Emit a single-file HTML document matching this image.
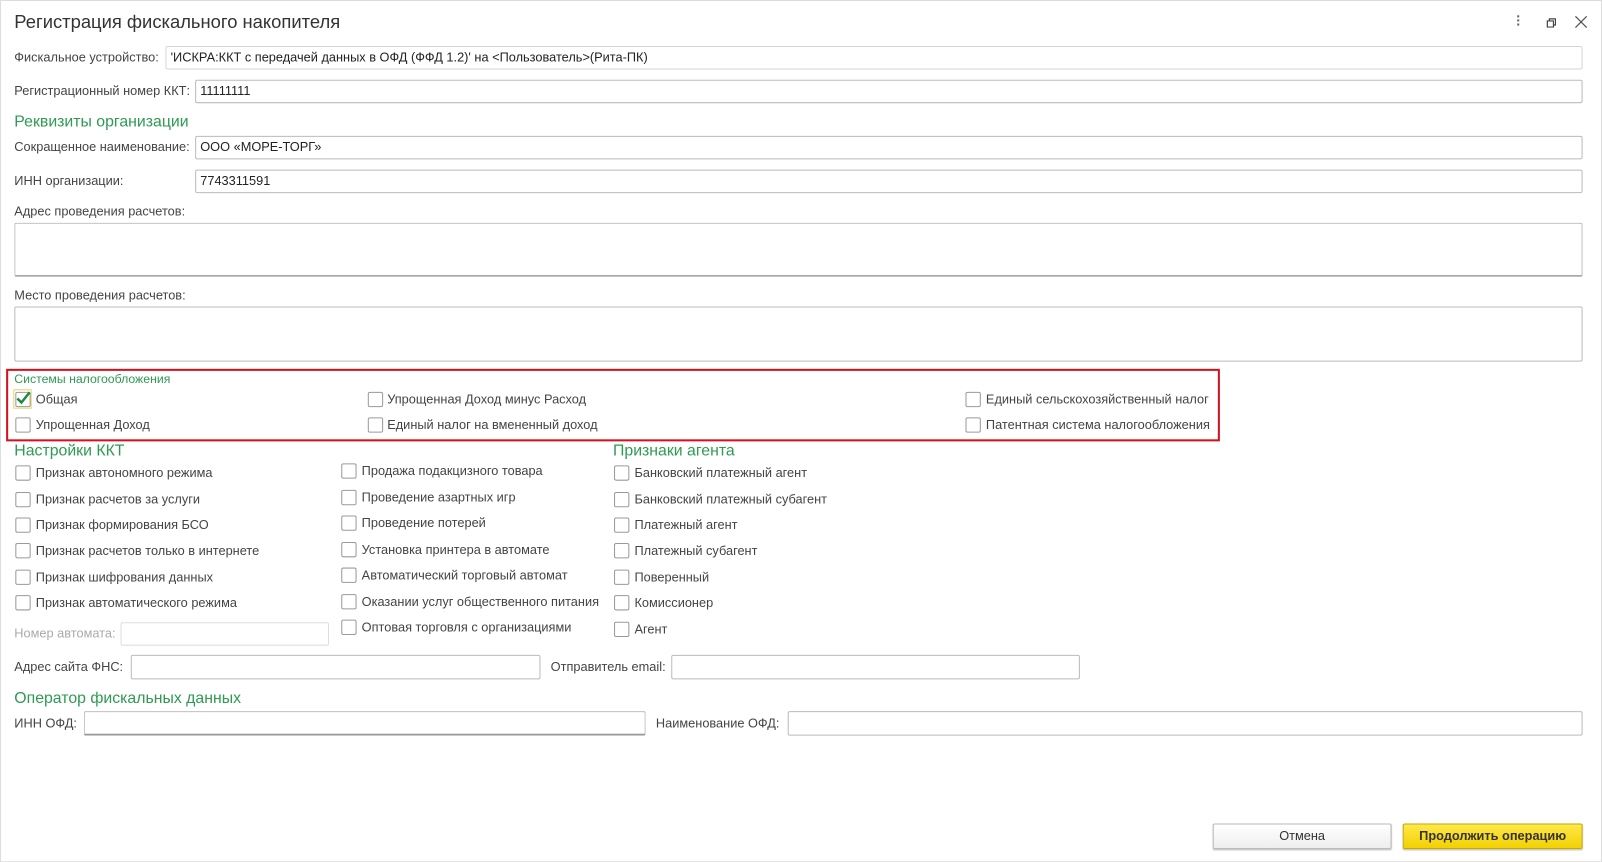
<!DOCTYPE html>
<html><head><meta charset="utf-8"><style>
html,body{margin:0;padding:0;background:#fff;overflow:hidden;width:1602px;height:862px}
#w{position:absolute;left:0;top:0;width:1568px;height:844px;transform:scale(1.02168);transform-origin:0 0;font-family:"Liberation Sans",sans-serif;font-size:12.5px;color:#444;border:1px solid #ddd;box-sizing:border-box}
.a{position:absolute;white-space:nowrap}
.l{position:absolute;white-space:nowrap;transform:translateY(-50%)}
.f{position:absolute;border:1px solid #bbb;border-radius:2px;background:#fff;box-sizing:border-box;padding-left:4px;line-height:21px;color:#222;white-space:nowrap;overflow:hidden}
.g{color:#2e9a52;font-size:15.5px}
.cb{position:absolute;width:13px;height:13px;border:1px solid #9a9a9a;border-radius:2px;background:#fff;transform:translateY(-50%)}
</style></head><body><div id="w">
<div class="l" style="left:13px;top:21px;font-size:18px;color:#333">Регистрация фискального накопителя</div>
<div class="a" style="left:1484px;top:14px;width:3px"><div style="width:2px;height:2px;background:#666;margin-bottom:2px"></div><div style="width:2px;height:2px;background:#666;margin-bottom:2px"></div><div style="width:2px;height:2px;background:#666"></div></div>
<svg class="a" style="left:1511px;top:15px" width="11" height="11"><path d="M2.5 4.5h6v6h-6z M4.5 4.5v-2h6v6h-2" fill="none" stroke="#444" stroke-width="1.2"/></svg>
<svg class="a" style="left:1540px;top:14px" width="13" height="13"><path d="M1 1L12 12M12 1L1 12" stroke="#555" stroke-width="1.2"/></svg>

<div class="l" style="left:13px;top:55px">Фискальное устройство:</div>
<div class="f" style="left:161px;top:44px;width:1387px;height:23px;border-color:#d6d6d6">'ИСКРА:ККТ с передачей данных в ОФД (ФФД 1.2)' на &lt;Пользователь&gt;(Рита-ПК)</div>
<div class="l" style="left:13px;top:88px">Регистрационный номер ККТ:</div>
<div class="f" style="left:190px;top:77px;width:1358px;height:23px">11111111</div>
<div class="l g" style="left:13px;top:119px">Реквизиты организации</div>
<div class="l" style="left:13px;top:143px">Сокращенное наименование:</div>
<div class="f" style="left:190px;top:132px;width:1358px;height:23px">ООО «МОРЕ-ТОРГ»</div>
<div class="l" style="left:13px;top:176px">ИНН организации:</div>
<div class="f" style="left:190px;top:165px;width:1358px;height:23px">7743311591</div>
<div class="l" style="left:13px;top:206px">Адрес проведения расчетов:</div>
<div class="f" style="left:13px;top:217px;width:1535px;height:53px;border-bottom:2px solid #aaa"></div>
<div class="l" style="left:13px;top:288px">Место проведения расчетов:</div>
<div class="f" style="left:13px;top:299px;width:1535px;height:54px"></div>

<div class="a" style="left:5px;top:360px;width:1188px;height:71px;border:2px solid #d3121d;box-sizing:border-box"></div>
<div class="l" style="left:13px;top:370px;color:#2e9a52;font-size:12px">Системы налогообложения</div>
<div class="a" style="left:12px;top:380px;width:18px;height:19px;border:1px solid #e8d36a;box-sizing:border-box"></div>
<div class="cb" style="left:14px;top:390px"></div>
<svg class="a" style="left:14px;top:382px" width="16" height="14"><path d="M2 7L6 11L14 1" fill="none" stroke="#1d8a3e" stroke-width="2.4"/></svg>
<div class="l" style="left:34px;top:390px">Общая</div>
<div class="cb" style="left:14px;top:415px"></div><div class="l" style="left:34px;top:415px">Упрощенная Доход</div>
<div class="cb" style="left:359px;top:390px"></div><div class="l" style="left:378px;top:390px">Упрощенная Доход минус Расход</div>
<div class="cb" style="left:359px;top:415px"></div><div class="l" style="left:378px;top:415px">Единый налог на вмененный доход</div>
<div class="cb" style="left:944px;top:390px"></div><div class="l" style="left:964px;top:390px">Единый сельскохозяйственный налог</div>
<div class="cb" style="left:944px;top:415px"></div><div class="l" style="left:964px;top:415px">Патентная система налогообложения</div>

<div class="l g" style="left:13px;top:441px">Настройки ККТ</div>
<div class="cb" style="left:14px;top:462px"></div><div class="l" style="left:34px;top:462px">Признак автономного режима</div>
<div class="cb" style="left:14px;top:488px"></div><div class="l" style="left:34px;top:488px">Признак расчетов за услуги</div>
<div class="cb" style="left:14px;top:513px"></div><div class="l" style="left:34px;top:513px">Признак формирования БСО</div>
<div class="cb" style="left:14px;top:538px"></div><div class="l" style="left:34px;top:538px">Признак расчетов только в интернете</div>
<div class="cb" style="left:14px;top:564px"></div><div class="l" style="left:34px;top:564px">Признак шифрования данных</div>
<div class="cb" style="left:14px;top:589px"></div><div class="l" style="left:34px;top:589px">Признак автоматического режима</div>
<div class="l" style="left:13px;top:619px;color:#aaa">Номер автомата:</div>
<div class="f" style="left:117px;top:608px;width:204px;height:23px;border-color:#ddd"></div>

<div class="cb" style="left:333px;top:460px"></div><div class="l" style="left:353px;top:460px">Продажа подакцизного товара</div>
<div class="cb" style="left:333px;top:486px"></div><div class="l" style="left:353px;top:486px">Проведение азартных игр</div>
<div class="cb" style="left:333px;top:511px"></div><div class="l" style="left:353px;top:511px">Проведение потерей</div>
<div class="cb" style="left:333px;top:537px"></div><div class="l" style="left:353px;top:537px">Установка принтера в автомате</div>
<div class="cb" style="left:333px;top:562px"></div><div class="l" style="left:353px;top:562px">Автоматический торговый автомат</div>
<div class="cb" style="left:333px;top:588px"></div><div class="l" style="left:353px;top:588px">Оказании услуг общественного питания</div>
<div class="cb" style="left:333px;top:613px"></div><div class="l" style="left:353px;top:613px">Оптовая торговля с организациями</div>

<div class="l g" style="left:599px;top:441px">Признаки агента</div>
<div class="cb" style="left:600px;top:462px"></div><div class="l" style="left:620px;top:462px">Банковский платежный агент</div>
<div class="cb" style="left:600px;top:488px"></div><div class="l" style="left:620px;top:488px">Банковский платежный субагент</div>
<div class="cb" style="left:600px;top:513px"></div><div class="l" style="left:620px;top:513px">Платежный агент</div>
<div class="cb" style="left:600px;top:538px"></div><div class="l" style="left:620px;top:538px">Платежный субагент</div>
<div class="cb" style="left:600px;top:564px"></div><div class="l" style="left:620px;top:564px">Поверенный</div>
<div class="cb" style="left:600px;top:589px"></div><div class="l" style="left:620px;top:589px">Комиссионер</div>
<div class="cb" style="left:600px;top:615px"></div><div class="l" style="left:620px;top:615px">Агент</div>

<div class="l" style="left:13px;top:652px">Адрес сайта ФНС:</div>
<div class="f" style="left:127px;top:640px;width:401px;height:24px"></div>
<div class="l" style="left:538px;top:652px">Отправитель email:</div>
<div class="f" style="left:656px;top:640px;width:400px;height:24px"></div>
<div class="l g" style="left:13px;top:683px">Оператор фискальных данных</div>
<div class="l" style="left:13px;top:707px">ИНН ОФД:</div>
<div class="f" style="left:81px;top:695px;width:550px;height:24px;border-bottom:2px solid #999"></div>
<div class="l" style="left:641px;top:707px">Наименование ОФД:</div>
<div class="f" style="left:770px;top:695px;width:778px;height:24px"></div>

<div class="a" style="left:1186px;top:805px;width:175px;height:25px;border:1px solid #bbb;border-radius:2px;background:linear-gradient(#fff,#eee);box-sizing:border-box;text-align:center;line-height:23px;color:#333;box-shadow:0 1px 1px #ccc">Отмена</div>
<div class="a" style="left:1372px;top:805px;width:176px;height:25px;border:1px solid #c9a800;border-radius:2px;background:linear-gradient(#ffe84a,#f3d100);box-sizing:border-box;text-align:center;line-height:23px;color:#333;font-weight:bold;box-shadow:0 1px 1px #ccc">Продолжить операцию</div>
</div></body></html>
